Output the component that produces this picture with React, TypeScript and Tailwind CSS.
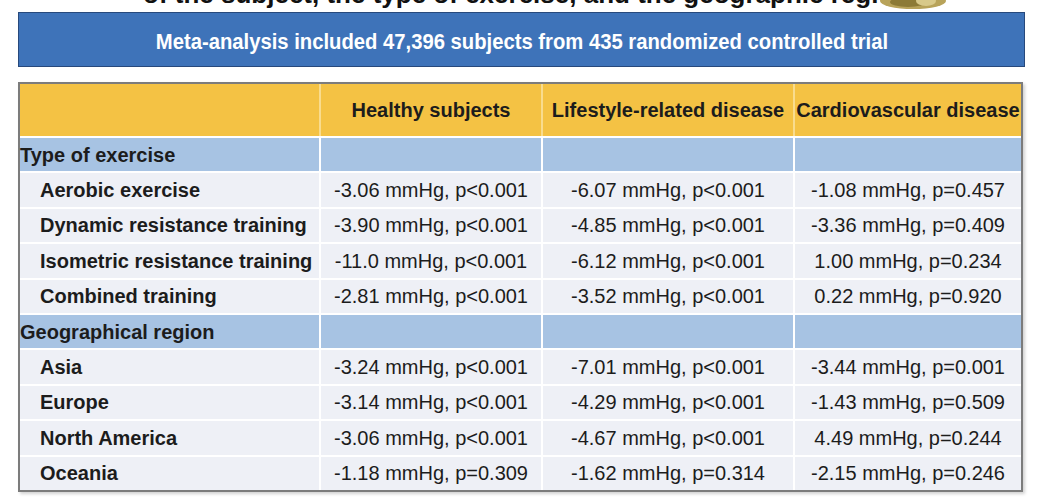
import React from "react";

type Row = { label: string; kind: "section" | "item"; v?: [string, string, string] };

const rows: Row[] = [
  { label: "Type of exercise", kind: "section" },
  { label: "Aerobic exercise", kind: "item", v: ["-3.06 mmHg, p<0.001", "-6.07 mmHg, p<0.001", "-1.08 mmHg, p=0.457"] },
  { label: "Dynamic resistance training", kind: "item", v: ["-3.90 mmHg, p<0.001", "-4.85 mmHg, p<0.001", "-3.36 mmHg, p=0.409"] },
  { label: "Isometric resistance training", kind: "item", v: ["-11.0 mmHg, p<0.001", "-6.12 mmHg, p<0.001", "1.00 mmHg, p=0.234"] },
  { label: "Combined training", kind: "item", v: ["-2.81 mmHg, p<0.001", "-3.52 mmHg, p<0.001", "0.22 mmHg, p=0.920"] },
  { label: "Geographical region", kind: "section" },
  { label: "Asia", kind: "item", v: ["-3.24 mmHg, p<0.001", "-7.01 mmHg, p<0.001", "-3.44 mmHg, p=0.001"] },
  { label: "Europe", kind: "item", v: ["-3.14 mmHg, p<0.001", "-4.29 mmHg, p<0.001", "-1.43 mmHg, p=0.509"] },
  { label: "North America", kind: "item", v: ["-3.06 mmHg, p<0.001", "-4.67 mmHg, p<0.001", "4.49 mmHg, p=0.244"] },
  { label: "Oceania", kind: "item", v: ["-1.18 mmHg, p=0.309", "-1.62 mmHg, p=0.314", "-2.15 mmHg, p=0.246"] },
];

export default function App() {
  return (
    <div
      className="relative w-[1040px] h-[500px] overflow-hidden bg-white"
      style={{ fontFamily: '"Liberation Sans", Arial, sans-serif' }}
    >
      {/* cut-off slide title */}
      <div className="h-[12px] overflow-hidden">
        <div className="mt-[-19px] pl-[143px] whitespace-nowrap text-[26px] leading-[26px] font-bold text-[#111]">
          of the subject, the type of exercise, and the geographic region
        </div>
      </div>
      <svg className="absolute left-[878px] top-0" width="70" height="10" viewBox="0 0 70 10">
        <ellipse cx="35" cy="1" rx="33" ry="8" fill="#b8a35a" />
        <ellipse cx="30" cy="2" rx="18" ry="5" fill="#8c7a36" />
        <ellipse cx="48" cy="1" rx="10" ry="5" fill="#d8c98a" />
      </svg>

      {/* banner */}
      <div className="ml-[18px] w-[1007px] h-[55px] pt-[3px] bg-[#3e73b9] border border-[#27497c] flex items-center justify-center">
        <span className="inline-block whitespace-nowrap text-white font-bold text-[22px] scale-x-[0.92] origin-center">
          Meta-analysis included 47,396 subjects from 435 randomized controlled trial
        </span>
      </div>

      {/* table */}
      <div className="ml-[18px] mt-[15px] w-[1005px] border-2 border-[#7c7c7c] bg-white shadow-[2px_2px_3px_rgba(0,0,0,0.18)]">
        <div className="grid grid-cols-[301px_222px_252px_226px] h-[52px] bg-[#f4c244] text-[20px] font-bold text-[#1c1c1c]">
          <div className="border-r-2 border-[#f9dc8e]" />
          <div className="border-r-2 border-[#f9dc8e] flex items-center justify-center whitespace-nowrap">Healthy subjects</div>
          <div className="border-r-2 border-[#f9dc8e] flex items-center justify-center whitespace-nowrap">Lifestyle-related disease</div>
          <div className="flex items-center justify-center whitespace-nowrap">Cardiovascular disease</div>
        </div>
        {rows.map((r, i) => (
          <div
            key={i}
            className={
              "grid grid-cols-[301px_222px_252px_226px] h-[35.4px] border-t-2 border-white text-[20px] text-[#1c1c1c] " +
              (r.kind === "section" ? "bg-[#a7c3e3]" : "bg-[#eef0f6]")
            }
          >
            <div
              className={
                "border-r-2 border-white flex items-center whitespace-nowrap font-bold " +
                (r.kind === "section" ? "pl-[0px]" : "pl-[20px]")
              }
            >
              {r.label}
            </div>
            <div className="border-r-2 border-white flex items-center justify-center whitespace-nowrap">{r.v ? r.v[0] : ""}</div>
            <div className="border-r-2 border-white flex items-center justify-center whitespace-nowrap">{r.v ? r.v[1] : ""}</div>
            <div className="flex items-center justify-center whitespace-nowrap">{r.v ? r.v[2] : ""}</div>
          </div>
        ))}
      </div>
    </div>
  );
}
